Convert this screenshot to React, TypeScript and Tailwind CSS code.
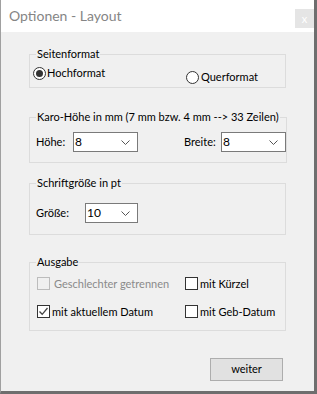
import { useState } from "react";

const Radio = ({ checked }: { checked: boolean }) => (
  <span className="w-[13px] h-[13px] rounded-full border border-[#333333] bg-white flex items-center justify-center shrink-0">
    {checked && <span className="w-[7px] h-[7px] rounded-full bg-[#333333]" />}
  </span>
);

const Check = ({ checked, disabled }: { checked?: boolean; disabled?: boolean }) => (
  <span
    className={
      disabled
        ? "w-[13px] h-[13px] border border-[#bcbcbc] bg-[#f0f0f0] shrink-0"
        : "w-[13px] h-[13px] border border-[#333333] bg-white shrink-0 flex items-center justify-center"
    }
  >
    {checked && (
      <svg width="11" height="11" viewBox="0 0 11 11">
        <path d="M1.5 5.5 L4.2 8.3 L9.5 2" fill="none" stroke="#444" strokeWidth="1.3" />
      </svg>
    )}
  </span>
);

const Select = ({ value, width }: { value: string; width: string }) => (
  <div className={`${width} h-[20px] border border-[#7a7a7a] bg-white flex items-center pl-[1px] pr-[4px] shrink-0`}>
    <span className="flex-1 text-[#000] text-[12px] leading-none">{value}</span>
    <svg width="9" height="5" viewBox="0 0 9 5" className="mr-[3px]">
      <path d="M0.5 0.5 L4.5 4.5 L8.5 0.5" fill="none" stroke="#555" strokeWidth="1" />
    </svg>
  </div>
);

const Group = ({ title, children, className }: { title: string; children: React.ReactNode; className: string }) => (
  <fieldset className={`ml-[28px] w-[257px] border border-[#dcdcdc] ${className}`}>
    <legend className="ml-[6px] px-[1px] leading-[16px] text-[#000] whitespace-nowrap">{title}</legend>
    {children}
  </fieldset>
);

export default function App() {
  const [hoch] = useState(true);
  return (
    <div
      className="w-[317px] h-[394px] flex flex-col bg-[#f0f0f0] border-l border-l-[#a0a0a0] border-r-[3px] border-r-[#6e6e6e] border-b-[3px] border-b-[#6e6e6e] text-[11px] text-black whitespace-nowrap"
      style={{ fontFamily: "Lato, sans-serif" }}
    >
      <div className="h-[32px] bg-white flex items-start shrink-0">
        <span className="ml-[8px] mt-[7px] text-[14px] text-[#858585] leading-[18px]">Optionen - Layout</span>
        <div className="ml-auto mr-[0px] mt-[9px] w-[19px] h-[19px] bg-[#e5e5e5] flex items-center justify-center text-white text-[11px] leading-none">
          x
        </div>
      </div>

      <Group title="Seitenformat" className="mt-[14px]">
        <div className="h-[25px] flex items-start">
          <div className="ml-[3px] mt-[4px] flex items-center gap-[1px]">
            <Radio checked={hoch} />
            <span className="leading-[14px]">Hochformat</span>
          </div>
          <div className="ml-auto mr-[27px] mt-[8px] flex items-center gap-[2px]">
            <Radio checked={!hoch} />
            <span className="leading-[14px]">Querformat</span>
          </div>
        </div>
      </Group>

      <Group title="Karo-Höhe in mm (7 mm bzw. 4 mm --> 33 Zeilen)" className="mt-[21px]">
        <div className="h-[37px] flex items-start pt-[7px]">
          <span className="ml-[6px] w-[37px] leading-[20px]">Höhe:</span>
          <Select value="8" width="w-[65px]" />
          <span className="ml-[46px] w-[37px] leading-[20px]">Breite:</span>
          <Select value="8" width="w-[65px]" />
        </div>
      </Group>

      <Group title="Schriftgröße in pt" className="mt-[12px]">
        <div className="h-[43px] flex items-start pt-[12px]">
          <span className="ml-[6px] w-[49px] leading-[20px]">Größe:</span>
          <Select value="10" width="w-[53px]" />
        </div>
      </Group>

      <Group title="Ausgabe" className="mt-[19px]">
        <div className="h-[60px] grid grid-cols-[148px_1fr] grid-rows-[13px_13px] gap-y-[15px] pt-[7px] pl-[7px]">
          <div className="flex items-center gap-[4px]">
            <Check disabled />
            <span className="leading-[13px] text-[#8a8a8a]">Geschlechter getrennen</span>
          </div>
          <div className="flex items-center gap-[2px]">
            <Check />
            <span className="leading-[13px]">mit Kürzel</span>
          </div>
          <div className="flex items-center gap-[2px]">
            <Check checked />
            <span className="leading-[13px]">mit aktuellem Datum</span>
          </div>
          <div className="flex items-center gap-[2px]">
            <Check />
            <span className="leading-[13px]">mit Geb-Datum</span>
          </div>
        </div>
      </Group>

      <div className="mt-[27px] ml-[209px] w-[73px] h-[23px] bg-[#e1e1e1] border border-[#adadad] flex items-center justify-center">
        weiter
      </div>
    </div>
  );
}
